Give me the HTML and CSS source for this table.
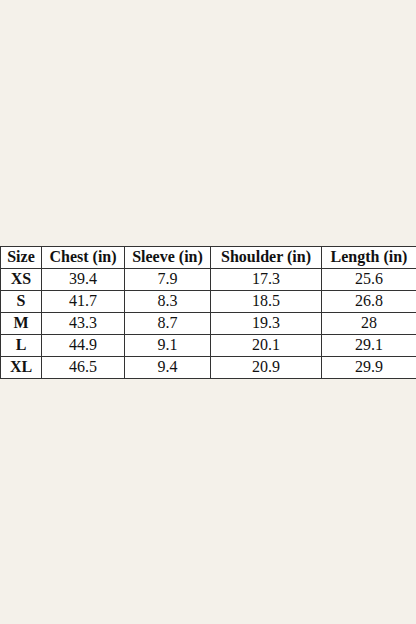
FILE: index.html
```html
<!DOCTYPE html>
<html>
<head>
<meta charset="utf-8">
<link rel="stylesheet" href="styles.css">
</head>
<body>
<main class="page">
  <table class="size-table">
    <colgroup>
      <col class="c-size"><col class="c-chest"><col class="c-sleeve"><col class="c-shoulder"><col class="c-length">
    </colgroup>
    <thead>
      <tr><th>Size</th><th>Chest (in)</th><th>Sleeve (in)</th><th>Shoulder (in)</th><th>Length (in)</th></tr>
    </thead>
    <tbody>
      <tr><th>XS</th><td>39.4</td><td>7.9</td><td>17.3</td><td>25.6</td></tr>
      <tr><th>S</th><td>41.7</td><td>8.3</td><td>18.5</td><td>26.8</td></tr>
      <tr><th>M</th><td>43.3</td><td>8.7</td><td>19.3</td><td>28</td></tr>
      <tr><th>L</th><td>44.9</td><td>9.1</td><td>20.1</td><td>29.1</td></tr>
      <tr><th>XL</th><td>46.5</td><td>9.4</td><td>20.9</td><td>29.9</td></tr>
    </tbody>
  </table>
</main>
</body>
</html>
```
FILE: styles.css
```css
html, body {
  margin: 0;
  padding: 0;
  background: #f4f1ea;
}
.page {
  min-height: 624px;
  display: flex;
  flex-direction: column;
  justify-content: center;
}
.size-table {
  width: 416px;
  border-collapse: collapse;
  table-layout: fixed;
  background: #ffffff;
  font-family: "Liberation Serif", "Times New Roman", serif;
  font-size: 16px;
  color: #111;
}
.c-size { width: 41px; }
.c-chest { width: 83px; }
.c-sleeve { width: 86px; }
.c-shoulder { width: 111px; }
.c-length { width: 95px; }
.size-table th, .size-table td {
  border: 1px solid #333;
  text-align: center;
  padding: 0;
  height: 21px;
  line-height: 20px;
  white-space: nowrap;
}
.size-table th { font-weight: bold; }
.size-table td { font-weight: normal; }
```
